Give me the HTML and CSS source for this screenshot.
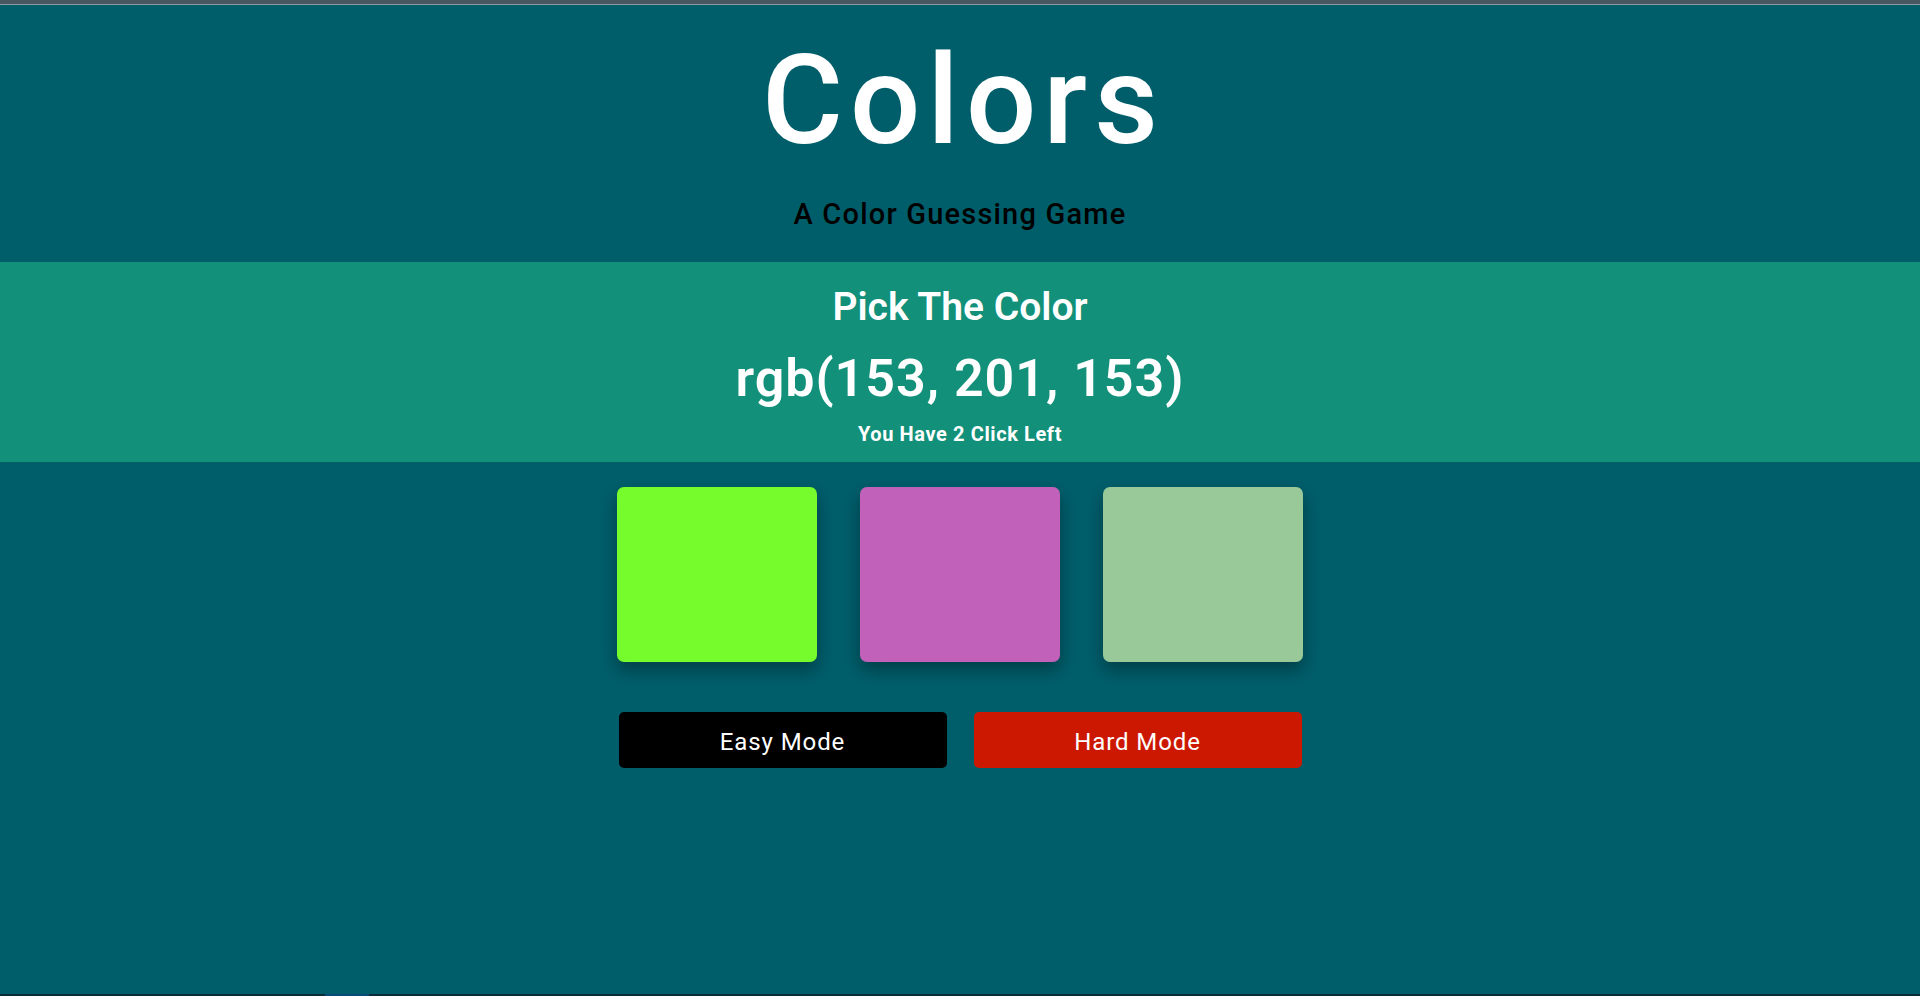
FILE: index.html
```html
<!DOCTYPE html>
<html lang="en">
<head>
<meta charset="utf-8">
<title>Colors</title>
<link rel="stylesheet" href="styles.css">
</head>
<body>
<div class="topbar"></div>
<header class="header">
  <h1 class="title">Colors</h1>
  <p class="subtitle">A Color Guessing Game</p>
</header>
<section class="band">
  <h2 class="pick">Pick The Color</h2>
  <div class="rgb">rgb(153, 201, 153)</div>
  <div class="clicks">You Have 2 Click Left</div>
</section>
<main class="game">
  <div class="squares">
    <div class="square sq-green"></div>
    <div class="square sq-pink"></div>
    <div class="square sq-sage"></div>
  </div>
  <div class="modes">
    <button class="mode mode-easy">Easy Mode</button>
    <button class="mode mode-hard">Hard Mode</button>
  </div>
</main>
<div class="bottombar"><span class="bottom-tab"></span></div>
</body>
</html>
```

FILE: styles.css
```css
* { box-sizing: border-box; }
html, body { height: 100%; }
body {
  margin: 0;
  background: #005e6b;
  font-family: Roboto, "Noto Sans", "DejaVu Sans", sans-serif;
  color: #fff;
  display: flex;
  flex-direction: column;
  min-height: 100vh;
  overflow: hidden;
}
.topbar {
  height: 5px;
  background: #485863;
  border-bottom: 1px solid #8d9aa1;
  flex: none;
}
.header {
  padding: 34px 0 33px;
  text-align: center;
}
.title {
  margin: 0;
  font-size: 124px;
  line-height: 124px;
  font-weight: 500;
  letter-spacing: 7px;
  text-indent: 7px;
  color: #fff;
}
.subtitle {
  margin: 37px 0 0;
  font-size: 29px;
  line-height: 29px;
  font-weight: 500;
  letter-spacing: 1.2px;
  color: #000;
}
.band {
  background: #12907a;
  text-align: center;
  padding: 26px 0 18px;
}
.pick {
  margin: 0;
  font-size: 39px;
  line-height: 39px;
  font-weight: 600;
}
.rgb {
  margin-top: 26px;
  font-size: 52px;
  line-height: 52px;
  font-weight: 600;
  letter-spacing: 1px;
}
.clicks {
  margin-top: 19px;
  font-size: 20px;
  line-height: 20px;
  font-weight: 700;
  letter-spacing: 0.6px;
}
.game {
  display: flex;
  flex-direction: column;
  align-items: center;
  padding-top: 25px;
}
.squares {
  display: flex;
  gap: 43px;
}
.square {
  width: 200px;
  height: 175px;
  border-radius: 7px;
  box-shadow: 0 8px 18px rgba(0, 0, 0, 0.35);
}
.sq-green { background: #76fb2c; }
.sq-pink { background: #c261b9; }
.sq-sage { background: #99c999; }
.modes {
  display: flex;
  gap: 27px;
  margin-top: 50px;
}
.mode {
  width: 328px;
  height: 56px;
  padding: 3px 0 0;
  border: none;
  border-radius: 5px;
  color: #fff;
  font-family: Roboto, "Noto Sans", sans-serif;
  font-size: 24px;
  font-weight: 400;
  letter-spacing: 0.9px;
  cursor: pointer;
}
.mode-easy { background: #000; }
.mode-hard { background: #cc1800; }
.bottombar {
  margin-top: auto;
  height: 2px;
  background: #0b2a3a;
  flex: none;
  position: relative;
}
.bottom-tab {
  position: absolute;
  left: 325px;
  width: 44px;
  height: 2px;
  background: #0a4a78;
}
```
